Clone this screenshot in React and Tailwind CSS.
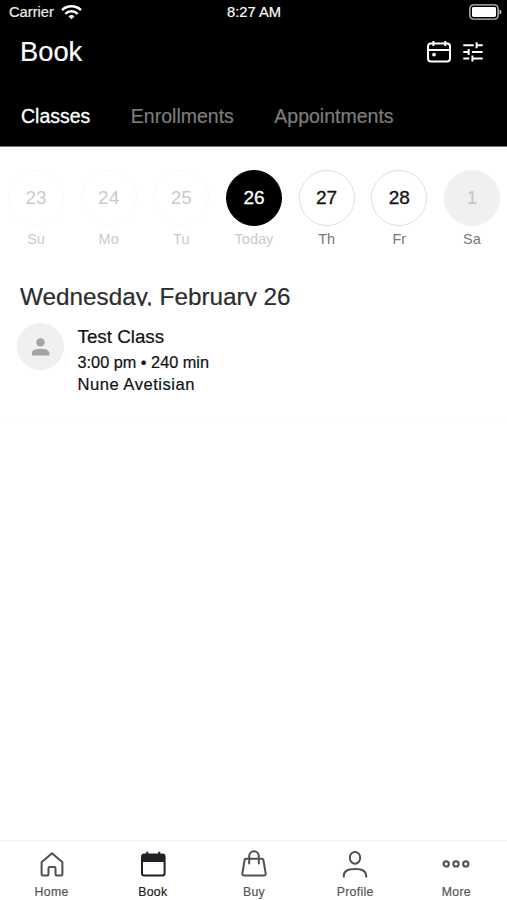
const days = [
  { n: "23", d: "Su", circle: "border-[#fafafa] text-[#cbcbcb]", label: "text-[#cbcbcb]" },
  { n: "24", d: "Mo", circle: "border-[#fafafa] text-[#cbcbcb]", label: "text-[#cbcbcb]" },
  { n: "25", d: "Tu", circle: "border-[#fafafa] text-[#cbcbcb]", label: "text-[#cbcbcb]" },
  { n: "26", d: "Today", circle: "border-black bg-black text-white [-webkit-text-stroke:0.3px]", label: "text-[#cbcbcb]" },
  { n: "27", d: "Th", circle: "border-[#dedede] text-[#111] [-webkit-text-stroke:0.3px]", label: "text-[#777]" },
  { n: "28", d: "Fr", circle: "border-[#dedede] text-[#111] [-webkit-text-stroke:0.3px]", label: "text-[#777]" },
  { n: "1", d: "Sa", circle: "border-[#f0f0f0] bg-[#f0f0f0] text-[#c4c4c4]", label: "text-[#777]" },
];

function Wifi() {
  return (
    <svg className="ml-[7px] h-[16px] w-[21px]" viewBox="0 0 21 16" fill="none" stroke="#fff" strokeWidth="2.4">
      <path d="M1 6.1a13.6 13.6 0 0 1 19 0" />
      <path d="M4.3 9.8a9 9 0 0 1 12.4 0" />
      <path d="M10.5 15.2 7.6 12.5a4.2 4.2 0 0 1 5.8 0z" fill="#fff" stroke="none" />
    </svg>
  );
}

function Battery() {
  return (
    <svg className="h-[17px] w-[33px]" viewBox="0 0 33 17">
      <rect x="0.9" y="0.9" width="28.2" height="14.2" rx="3.6" fill="none" stroke="#c4c4c4" strokeWidth="1.4" />
      <rect x="3" y="3" width="24" height="10" rx="1.4" fill="#fff" />
      <path d="M30.5 5.4q2 .7 2 2.6t-2 2.6z" fill="#c4c4c4" />
    </svg>
  );
}

function CalendarIcon() {
  return (
    <svg className="h-[24px] w-[26px]" viewBox="0 0 26 24" fill="none" stroke="#fff" strokeWidth="2">
      <rect x="2" y="3.6" width="22" height="17.8" rx="3" />
      <path d="M2 10h22M7.4 1v5M19.3 1v5" />
      <circle cx="8" cy="14.6" r="1.9" fill="#fff" stroke="none" />
    </svg>
  );
}

function TuneIcon() {
  return (
    <svg className="h-[22px] w-[22px]" viewBox="0 0 22 22" fill="none" stroke="#fff" strokeWidth="2">
      <path d="M1.3 4.2h10.400M14.600 4.200h6.100M14.600 1.200v6M1.300 10.900h5.400M6.700 7.900v6M9.900 10.900h10.800M1.300 17.400h6M10.400 17.400h10.300M10.400 14.400v6" />
    </svg>
  );
}

function HomeIcon() {
  return (
    <svg className="h-[30px] w-[30px]" viewBox="0 0 30 30" fill="none" stroke="#505052" strokeWidth="2" strokeLinejoin="round">
      <path d="M4.6 12.3 15 3.2l10.4 9.1v12q0 1.2-1.2 1.2h-4.500q-1.200 0-1.200-1.200v-6.200q0-1.200-1.200-1.200h-4.600q-1.200 0-1.200 1.200v6.200q0 1.200-1.200 1.200H5.800q-1.200 0-1.200-1.200z" />
    </svg>
  );
}

function BookIcon() {
  return (
    <svg className="h-[30px] w-[30px]" viewBox="0 0 30 30" fill="none" stroke="#202124" strokeWidth="2">
      <rect x="4" y="4.500" width="22.600" height="21" rx="2.200" />
      <path d="M4 5h22.600v7H4z" fill="#202124" stroke="none" />
      <path d="M9.200 1.800v4M21.200 1.800v4" />
    </svg>
  );
}

function BagIcon() {
  return (
    <svg className="h-[30px] w-[30px]" viewBox="0 0 30 30" fill="none" stroke="#505052" strokeWidth="2" strokeLinecap="round" strokeLinejoin="round">
      <path d="M7 8.800h16q1.200 0 1.400 1.200l2.200 13.200q.4 2.300-1.900 2.300H5.300q-2.300 0-1.900-2.300L5.600 10Q5.800 8.800 7 8.800z" />
      <path d="M10.200 13.500V6a4.800 4.800 0 0 1 9.600 0v7.500" />
    </svg>
  );
}

function ProfileIcon() {
  return (
    <svg className="h-[30px] w-[30px]" viewBox="0 0 30 30" fill="none" stroke="#505052" strokeWidth="2">
      <ellipse cx="15" cy="7.800" rx="5.200" ry="5.900" />
      <path d="M3.800 27.500v-1.700c0-4.500 4.400-6.900 11.200-6.900s11.200 2.400 11.200 6.900v1.700" />
    </svg>
  );
}

function MoreIcon() {
  return (
    <svg className="h-[30px] w-[30px]" viewBox="0 0 30 30" fill="none" stroke="#505052" strokeWidth="2.100">
      <circle cx="5.200" cy="13.900" r="2.600" />
      <circle cx="15" cy="13.900" r="2.600" />
      <circle cx="24.800" cy="13.900" r="2.600" />
    </svg>
  );
}

const tabs = [
  { label: "Home", Icon: HomeIcon },
  { label: "Book", Icon: BookIcon, active: true },
  { label: "Buy", Icon: BagIcon },
  { label: "Profile", Icon: ProfileIcon },
  { label: "More", Icon: MoreIcon },
];

export default function App() {
  return (
    <div className="flex h-[900px] w-[507px] flex-col overflow-hidden bg-white font-['Liberation_Sans',Arial,sans-serif]">
      <header className="h-[147px] shrink-0 border-b border-[#777] bg-black text-white">
        <div className="grid h-6 grid-cols-3 items-center text-[14.700px] leading-6 [-webkit-text-stroke:0.2px]">
          <div className="flex items-center pl-[9px] text-[#eee]">
            Carrier
            <Wifi />
          </div>
          <div className="pl-px text-center">8:27 AM</div>
          <div className="flex justify-end pr-[5px]">
            <Battery />
          </div>
        </div>
        <div className="flex h-[56px] items-center pr-[23px] pl-5">
          <h1 className="flex-1 text-[27.300px] leading-[56px] [-webkit-text-stroke:0.2px]">Book</h1>
          <div className="flex items-center gap-[10px]">
            <CalendarIcon />
            <TuneIcon />
          </div>
        </div>
        <nav className="flex h-[66px] gap-[40.500px] pl-[21px] text-[19.500px] leading-[72px] text-[#7d7d7d] [-webkit-text-stroke:0.2px]">
          <span className="text-white [-webkit-text-stroke:0.300px]">Classes</span>
          <span>Enrollments</span>
          <span>Appointments</span>
        </nav>
      </header>

      <section className="flex shrink-0 justify-between pt-[23px] pr-[7px] pl-[8px]">
        {days.map((day) => (
          <div key={day.n} className="flex w-[56px] flex-col items-center">
            <div className={`flex size-[56px] items-center justify-center rounded-full border text-[19px] ${day.circle}`}>{day.n}</div>
            <div className={`mt-[4px] text-[14.500px] leading-[18px] ${day.label}`}>{day.d}</div>
          </div>
        ))}
      </section>

      <main className="flex-1">
        <h2 className="mt-[34px] ml-5 h-[24px] overflow-hidden text-[24.300px] leading-[30px] whitespace-nowrap text-[#2c2c2e] [-webkit-text-stroke:0.2px]">Wednesday, February 26</h2>
        <article className="flex h-[113px] gap-[13px] border-b border-[#fafafa] pt-[17px] pl-[17px]">
          <div className="flex size-[47px] items-center justify-center rounded-full bg-[#f0f0f0]">
            <svg className="size-[18px]" viewBox="0 0 18 18" fill="#a3a3a3">
              <circle cx="8.500" cy="4.400" r="4.200" />
              <path d="M-.3 17.500v-2.400c0-3 4-4.400 8.800-4.400s8.800 1.400 8.800 4.400v2.400z" />
            </svg>
          </div>
          <div className="pl-[0.500px] text-[16.300px] leading-[22.500px] text-[#111] [-webkit-text-stroke:0.200px]">
            <h3 className="text-[18.800px] leading-[28px]">Test Class</h3>
            <p>3:00 pm • 240 min</p>
            <p className="text-[16.600px] tracking-[0.500px]">Nune Avetisian</p>
          </div>
        </article>
      </main>

      <footer className="grid h-[60px] shrink-0 grid-cols-5 border-t border-[#f2f2f2] pl-px">
        {tabs.map(({ label, Icon, active }) => (
          <div key={label} className={`flex flex-col items-center pt-[9px] text-[12.300px] tracking-[0.300px] [-webkit-text-stroke:0.200px] ${active ? "text-[#202124]" : "text-[#555]"}`}>
            <Icon />
            <span className="mt-[5px] leading-[14px]">{label}</span>
          </div>
        ))}
      </footer>
    </div>
  );
}
